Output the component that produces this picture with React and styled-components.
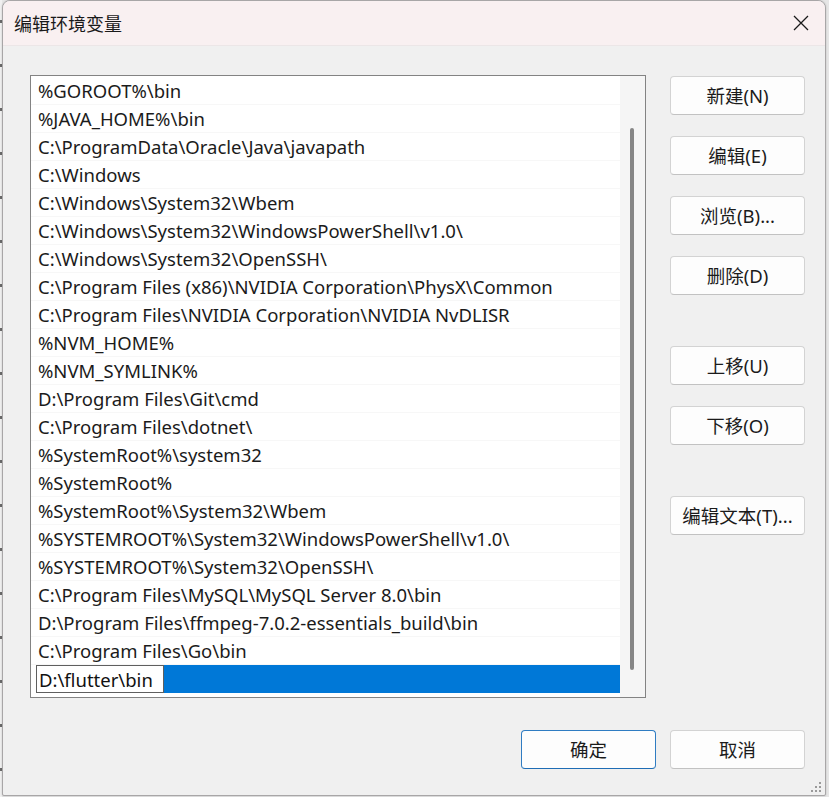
import React from "react";
import styled, { createGlobalStyle } from "styled-components";

const Global = createGlobalStyle`
  html, body { margin: 0; padding: 0; }
  body {
    width: 829px; height: 797px; overflow: hidden;
    background: #e6e6e6;
    font-family: "Noto Sans", "Noto Sans CJK SC", sans-serif;
  }
`;

const Page = styled.div`
  display: flex;
  padding-left: 2px;
  height: 797px;
  box-sizing: border-box;
`;

const BackStrip = styled.div`
  position: absolute;
  left: 0; top: 0;
  width: 2px; height: 797px;
  background: repeating-linear-gradient(180deg, #f0f0f0 0 20px, #6a6a6a 20px 23px, #f0f0f0 23px 44px);
`;

const Dialog = styled.div`
  width: 824px;
  height: 796px;
  box-sizing: border-box;
  border: 1px solid #a8a6a7;
  border-radius: 8px 8px 2px 2px;
  overflow: hidden;
  background: #f0f0f0;
  display: flex;
  flex-direction: column;
  position: relative;
  box-shadow: 0 0 2px rgba(0,0,0,0.2);
`;

const TitleBar = styled.div`
  height: 44px;
  flex: none;
  background: #f9f0f1;
  display: flex;
  align-items: center;
  justify-content: space-between;
  padding: 0 16px 0 11px;
  border-bottom: 1px solid #ece6e7;
`;

const Title = styled.div`
  font-family: "Noto Sans CJK SC", sans-serif;
  font-size: 18px;
  color: #1a1a1a;
`;

const Body = styled.div`
  display: flex;
  padding: 29px 20px 0 27px;
  gap: 24px;
`;

const ListBox = styled.div`
  width: 616px;
  height: 623px;
  box-sizing: border-box;
  border: 1px solid #838383;
  background: #ffffff;
  display: flex;
  flex: none;
`;

const Rows = styled.div`
  flex: 1;
  padding-top: 1px;
  display: flex;
  flex-direction: column;
`;

const Row = styled.div`
  height: 28px;
  flex: none;
  box-sizing: border-box;
  border-bottom: 1px solid #f7f7f7;
  padding-left: 7px;
  padding-bottom: 1px;
  display: flex;
  align-items: center;
  font-size: 18.5px;
  color: #1b1b1b;
  white-space: nowrap;
  overflow: hidden;
`;

const SelectedRow = styled.div`
  height: 28px;
  flex: none;
  display: flex;
  padding-left: 5px;
  background: linear-gradient(90deg, #ffffff 0 5px, #0078d7 5px);
`;

const EditBox = styled.div`
  width: 128px;
  box-sizing: border-box;
  border: 1px solid #5f5f5f;
  background: #fff;
  display: flex;
  align-items: center;
  padding-left: 2px;
  font-size: 18.5px;
  color: #111;
  white-space: nowrap;
`;

const ScrollTrack = styled.div`
  width: 25px;
  flex: none;
  background: #f5f5f5;
  display: flex;
  justify-content: center;
  padding-top: 52px;
`;

const Thumb = styled.div`
  width: 4px;
  height: 542px;
  border-radius: 2px;
  background: #868686;
  margin-left: -2px;
`;

const ButtonCol = styled.div`
  display: flex;
  flex-direction: column;
  padding-top: 1px;
`;

const Btn = styled.div`
  width: 135px;
  height: 39px;
  box-sizing: border-box;
  border: 1px solid ${p => (p.$primary ? "#2f7cc2" : "#d3d3d3")};
  border-bottom-color: ${p => (p.$primary ? "#1f6db5" : "#c2c2c2")};
  border-radius: 4px;
  background: #fdfdfd;
  display: flex;
  align-items: center;
  justify-content: center;
  padding-bottom: 1px;
  font-family: "Noto Sans", "Noto Sans CJK SC", sans-serif;
  font-size: 18.5px;
  color: #1b1b1b;
  margin-top: ${p => p.$mt || 0}px;
  flex: none;
`;

const Footer = styled.div`
  display: flex;
  justify-content: flex-end;
  gap: 14px;
  padding: 32px 20px 0 0;
`;

const Grip = styled.svg`
  position: absolute;
  right: 3px;
  bottom: 2px;
`;

const paths = [
  "%GOROOT%\\bin",
  "%JAVA_HOME%\\bin",
  "C:\\ProgramData\\Oracle\\Java\\javapath",
  "C:\\Windows",
  "C:\\Windows\\System32\\Wbem",
  "C:\\Windows\\System32\\WindowsPowerShell\\v1.0\\",
  "C:\\Windows\\System32\\OpenSSH\\",
  "C:\\Program Files (x86)\\NVIDIA Corporation\\PhysX\\Common",
  "C:\\Program Files\\NVIDIA Corporation\\NVIDIA NvDLISR",
  "%NVM_HOME%",
  "%NVM_SYMLINK%",
  "D:\\Program Files\\Git\\cmd",
  "C:\\Program Files\\dotnet\\",
  "%SystemRoot%\\system32",
  "%SystemRoot%",
  "%SystemRoot%\\System32\\Wbem",
  "%SYSTEMROOT%\\System32\\WindowsPowerShell\\v1.0\\",
  "%SYSTEMROOT%\\System32\\OpenSSH\\",
  "C:\\Program Files\\MySQL\\MySQL Server 8.0\\bin",
  "D:\\Program Files\\ffmpeg-7.0.2-essentials_build\\bin",
  "C:\\Program Files\\Go\\bin",
];

const buttons = [
  ["新建(N)", 0],
  ["编辑(E)", 21],
  ["浏览(B)...", 21],
  ["删除(D)", 21],
  ["上移(U)", 51],
  ["下移(O)", 21],
  ["编辑文本(T)...", 51],
];

export default function App() {
  return (
    <>
      <Global />
      <Page>
        <BackStrip />
        <Dialog>
          <TitleBar>
            <Title>编辑环境变量</Title>
            <svg width="16" height="16" viewBox="0 0 16 16">
              <path d="M1 1 L15 15 M15 1 L1 15" stroke="#1a1a1a" strokeWidth="1.3" fill="none" />
            </svg>
          </TitleBar>
          <Body>
            <ListBox>
              <Rows>
                {paths.map((p, i) => (
                  <Row key={i}>{p}</Row>
                ))}
                <SelectedRow>
                  <EditBox>D:\flutter\bin</EditBox>
                </SelectedRow>
              </Rows>
              <ScrollTrack>
                <Thumb />
              </ScrollTrack>
            </ListBox>
            <ButtonCol>
              {buttons.map(([t, mt]) => (
                <Btn key={t} $mt={mt}>{t}</Btn>
              ))}
            </ButtonCol>
          </Body>
          <Footer>
            <Btn $primary>确定</Btn>
            <Btn>取消</Btn>
          </Footer>
          <Grip width="12" height="12" viewBox="0 0 12 12">
            {[[9, 1], [9, 5], [5, 5], [9, 9], [5, 9], [1, 9]].map(([x, y], i) => (
              <rect key={i} x={x} y={y} width="2" height="2" fill="#9a9a9a" />
            ))}
          </Grip>
        </Dialog>
      </Page>
    </>
  );
}
